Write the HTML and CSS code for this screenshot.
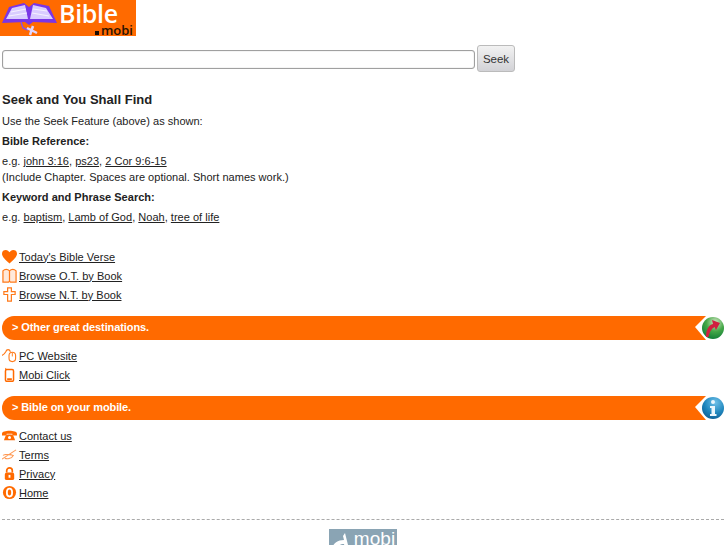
FILE: index.html
```html
<!DOCTYPE html>
<html lang="en">
<head>
    <meta charset="UTF-8">
    <meta name="viewport" content="width=device-width, initial-scale=1.0">
    <title>Bible.mobi</title>
    <link rel="stylesheet" href="styles.css">
</head>
<body>
    <div class="logo">
        <svg class="logo-book" width="58" height="36" viewBox="0 0 58 36">
            <path d="M2 23 L9 7 L24 3 L29 7 L34 3 L49 6 L57 23 L33 22 L29 25 L25 22 Z" fill="#7a35e6"/>
            <path d="M6 19 L12 8 L25 5 L28 19 Z M30 19 L33 5 L46 8 L53 19 Z" fill="#d9ccff"/>
            <path d="M11 12 L26 9 M9 16 L27 13 M33 9 L47 11 M32 13 L49 16" stroke="#f4f0ff" stroke-width="1.200" fill="none"/>
            <path d="M21 22 L23 28 L28 30" stroke="#8a4fe8" stroke-width="1.500" fill="none"/>
            <path d="M27 28 L37 33 M33 26 L30 35" stroke="#e0d6ff" stroke-width="2.500" fill="none"/>
        </svg>
        <div class="logo-text">
            <span class="logo-name">Bible</span>
            <span class="logo-mobi"><b class="logo-dot"></b>mobi</span>
        </div>
    </div>

    <form class="seek-form">
        <input type="text" class="seek-input">
        <button type="button" class="seek-btn">Seek</button>
    </form>

    <div class="intro">
        <h1>Seek and You Shall Find</h1>
        <p>Use the Seek Feature (above) as shown:</p>
        <p><strong>Bible Reference:</strong></p>
        <p>e.g. <a href="#">john 3:16</a>, <a href="#">ps23</a>, <a href="#">2 Cor 9:6-15</a><br>
        (Include Chapter. Spaces are optional. Short names work.)</p>
        <p><strong>Keyword and Phrase Search:</strong></p>
        <p>e.g. <a href="#">baptism</a>, <a href="#">Lamb of God</a>, <a href="#">Noah</a>, <a href="#">tree of life</a></p>
    </div>

    <ul class="links links-first">
        <li>
            <svg viewBox="0 0 16 16"><path d="M8 15.500 C3 11 0 8 0 5 C0 2 2 1 4 1 C6 1 7 2 8 3.500 C9 2 10 1 12 1 C14 1 16 2 16 5 C16 8 13 11 8 15.500 Z" fill="#ff6a00"/></svg>
            <a href="#">Today's Bible Verse</a>
        </li>
        <li>
            <svg viewBox="0 0 16 16"><path d="M1 3 C3 1 6 1 8 3 C10 1 13 1 15 3 V15 H9 L8 14 L7 15 H1 Z M8 3 V14" fill="#ffe9da" stroke="#ff7a1a" stroke-width="1.300"/></svg>
            <a href="#">Browse O.T. by Book</a>
        </li>
        <li>
            <svg viewBox="0 0 16 16"><path d="M6 1 H10 V5 H14 V8 H10 V15 H6 V8 H2 V5 H6 Z" fill="#fff" stroke="#ff7a1a" stroke-width="1.300"/></svg>
            <a href="#">Browse N.T. by Book</a>
        </li>
    </ul>

    <div class="bar">
        <span>&gt; Other great destinations.</span>
        <svg class="bar-icon" width="30" height="24" viewBox="0 0 30 24">
            <defs>
                <radialGradient id="greenBall" cx="0.6" cy="0.25" r="0.8"><stop offset="0" stop-color="#d8e8c8"/><stop offset="0.5" stop-color="#45a848"/><stop offset="1" stop-color="#0c7a34"/></radialGradient>
            </defs>
            <path d="M11 0 L0 11 L11 24 H30 V0 Z" fill="#fff"/>
            <circle cx="18" cy="12" r="11" fill="url(#greenBall)"/>
            <path d="M11 21 C11 13 14 9 18 8 L17 4 L25 7 L21 14 L19.500 11 C16 13 14 17 13.500 21 Z" fill="#d02040"/>
        </svg>
    </div>

    <ul class="links">
        <li>
            <svg viewBox="0 0 16 16"><path d="M0 8 C2 7 3 6 4 4 C5 1 8 1 9 4" fill="none" stroke="#ff7a1a" stroke-width="1.200"/><rect x="7.500" y="4.500" width="7" height="10" rx="3.500" fill="#fff" stroke="#ff7a1a" stroke-width="1.200"/><path d="M11 5 V9" stroke="#ff7a1a"/></svg>
            <a href="#">PC Website</a>
        </li>
        <li>
            <svg viewBox="0 0 16 16"><rect x="3.700" y="2.700" width="8.600" height="12.600" rx="1.500" fill="#fff" stroke="#ff6a00" stroke-width="1.600"/><path d="M4 1 V3" stroke="#ff6a00"/><rect x="5.500" y="12" width="5" height="2" fill="#ff6a00"/></svg>
            <a href="#">Mobi Click</a>
        </li>
    </ul>

    <div class="bar">
        <span>&gt; Bible on your mobile.</span>
        <svg class="bar-icon" width="30" height="24" viewBox="0 0 30 24">
            <defs>
                <radialGradient id="blueBall" cx="0.6" cy="0.25" r="0.8"><stop offset="0" stop-color="#6fc0e8"/><stop offset="0.6" stop-color="#1f86bd"/><stop offset="1" stop-color="#0e5f95"/></radialGradient>
            </defs>
            <path d="M11 0 L0 11 L11 24 H30 V0 Z" fill="#fff"/>
            <circle cx="18" cy="12" r="11" fill="url(#blueBall)"/>
            <circle cx="18" cy="6" r="2" fill="#eaf6fc"/>
            <path d="M15 10 H20 V18 H21.500 V20 H15 V18 H16.500 V12 H15 Z" fill="#eaf6fc"/>
        </svg>
    </div>

    <ul class="links">
        <li>
            <svg viewBox="0 0 16 16"><path d="M0 6 C0 2 16 2 16 6 V8 H11 V6 H5 V8 H0 Z" fill="#ff6a00"/><path d="M4 8 L6 7 H10 L12 8 L14 13 H2 Z" fill="#ff6a00"/><circle cx="8" cy="10" r="1.600" fill="#fff"/></svg>
            <a href="#">Contact us</a>
        </li>
        <li>
            <svg viewBox="0 0 16 16"><path d="M0 13 L15 3 M3 8 H10 M1 9 C4 7 7 8 12 9 C10 13 5 13 3 12" fill="none" stroke="#ff9a55" stroke-width="1.100"/></svg>
            <a href="#">Terms</a>
        </li>
        <li>
            <svg viewBox="0 0 16 16"><path d="M5 7 V5 C5 1 11 1 11 5 V7" fill="none" stroke="#ff6a00" stroke-width="1.800"/><rect x="3" y="7" width="10" height="8" rx="2" fill="#ff6a00"/><rect x="7" y="9.500" width="2" height="3" fill="#fff"/></svg>
            <a href="#">Privacy</a>
        </li>
        <li>
            <svg viewBox="0 0 16 16"><circle cx="8" cy="8" r="7" fill="#ff6a00"/><ellipse cx="8" cy="8" rx="2.800" ry="4.200" fill="none" stroke="#fff" stroke-width="2"/></svg>
            <a href="#">Home</a>
        </li>
    </ul>

    <div class="footer">
        <div class="mobi-badge">
            <svg width="20" height="16" viewBox="0 0 20 16"><path d="M1 16 C2 10 7 7 13 7 L12 3 L14 0 L18 16 H14 L13 11 C9 11 7 13 6 16 Z" fill="#fff"/></svg>
            <span>mobi</span>
        </div>
    </div>
</body>
</html>
```

FILE: styles.css
```css
body {
    margin: 0;
    padding: 0 2px;
    font-family: "Liberation Sans", Arial, sans-serif;
    font-size: 11px;
    letter-spacing: 0.02px;
    color: #222;
    background-color: white;
}
a {
    color: #222;
}
.logo {
    display: flex;
    width: 136px;
    height: 36px;
    margin-left: -2px;
    background-color: #ff6a00;
}
.logo-book {
    display: block;
    flex: none;
}
.logo-text {
    display: flex;
    flex-direction: column;
    flex: 1;
    padding: 1px 3px 0 1px;
}
.logo-name {
    font-family: "Open Sans", sans-serif;
    font-size: 25px;
    font-weight: 600;
    line-height: 24px;
    letter-spacing: -0.3px;
    color: #fff;
}
.logo-mobi {
    align-self: flex-end;
    font-family: "Open Sans", sans-serif;
    font-size: 13px;
    line-height: 11px;
    font-weight: 600;
    letter-spacing: 0;
    color: #2a1200;
}
.logo-dot {
    display: inline-block;
    width: 4px;
    height: 4px;
    margin-right: 2px;
    background-color: #1a0a00;
}
.seek-form {
    display: flex;
    align-items: flex-start;
    gap: 2px;
    margin-top: 9px;
}
.seek-input {
    box-sizing: border-box;
    width: 473px;
    height: 19px;
    margin: 5px 0 0;
    padding: 0 4px;
    border: 1px solid #a0a0a0;
    border-radius: 3px;
    box-shadow: inset 0 0 1px #999;
}
.seek-btn {
    box-sizing: border-box;
    width: 38px;
    height: 27px;
    padding: 0;
    border: 1px solid #bbb;
    border-radius: 3px;
    background: linear-gradient(#f2f2f2, #d2d2d6);
    font-family: "Liberation Sans", Arial, sans-serif;
    font-size: 11.5px;
    color: #333;
}
.intro {
    margin-top: 20px;
}
h1 {
    margin: 0 0 5px;
    font-size: 13px;
    line-height: 16px;
}
.intro p {
    margin: 0 0 4px;
    line-height: 16px;
}
.links {
    margin: 6px 0 0;
    padding: 0 0 1px;
    list-style: none;
}
.links-first {
    margin-top: 22px;
}
.links li {
    display: flex;
    align-items: center;
    gap: 2px;
    height: 19px;
}
.links svg {
    flex: none;
    width: 15px;
    height: 15px;
}
.bar {
    position: relative;
    box-sizing: border-box;
    display: flex;
    align-items: center;
    height: 24px;
    margin: 11px 0 0;
    padding: 0 0 2px 10px;
    width: 704px;
    border-radius: 12px 0 0 12px;
    background-color: #ff6a00;
    color: #fff;
    font-weight: bold;
    letter-spacing: -0.1px;
}
.bar-icon {
    position: absolute;
    left: 693px;
    top: 0;
}
.footer {
    margin: 16px 1px 0 0;
    border-top: 1px dashed #aaa;
    padding-top: 9px;
}
.mobi-badge {
    display: flex;
    align-items: flex-start;
    justify-content: center;
    gap: 3px;
    width: 68px;
    height: 26px;
    margin: 0 auto;
    background-color: #8aa4b4;
    color: #fff;
    font-size: 19px;
    line-height: 20px;
}
.mobi-badge svg {
    margin-top: 4px;
}
```
